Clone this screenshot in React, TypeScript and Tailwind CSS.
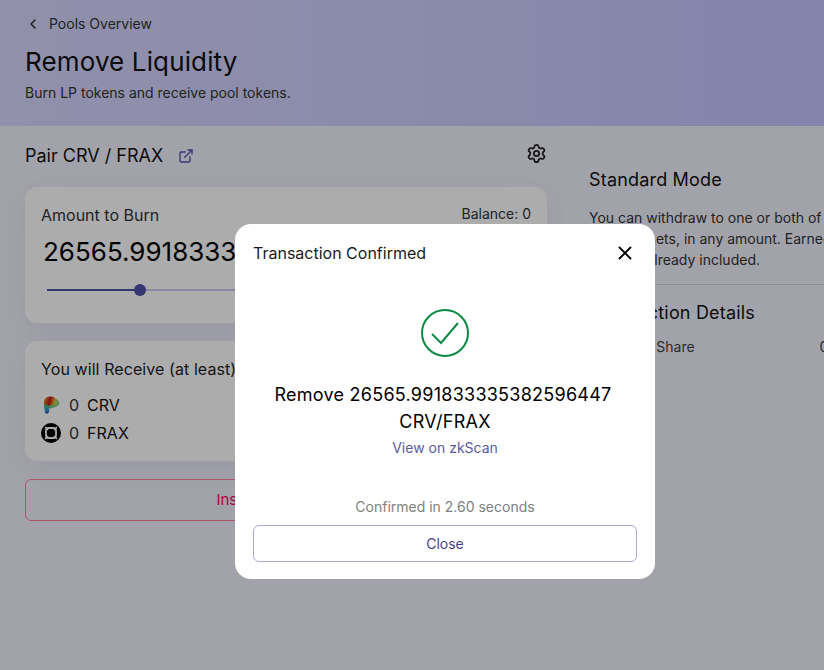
import { ChevronLeft, ExternalLink, Settings, X } from "lucide-react";

function CrvLogo() {
  return (
    <svg width="20" height="20" viewBox="0 0 20 20" aria-hidden>
      <defs>
        <linearGradient id="crv" x1="0" y1="0" x2="1" y2="0.2">
          <stop offset="0" stopColor="#e8a020" />
          <stop offset="0.45" stopColor="#c01818" />
          <stop offset="0.75" stopColor="#e8c030" />
          <stop offset="1" stopColor="#70d090" />
        </linearGradient>
        <linearGradient id="crvLow" x1="0" y1="0" x2="0" y2="1">
          <stop offset="0" stopColor="#50c060" />
          <stop offset="0.6" stopColor="#30a0d0" />
          <stop offset="1" stopColor="#2040c0" />
        </linearGradient>
      </defs>
      <path d="M3 9 C2 4 6 1 10 1.500 C14 2 18 5 18.500 8.500 C18 11 13 13 9 13 L3 12 Z" fill="url(#crv)" />
      <path d="M3 9 L8.500 11 L8 17 C7 19 4.500 19.500 4 17 C3.500 14 3 12 3 9 Z" fill="url(#crvLow)" />
      <path d="M8.500 10 L15 10.500 C13 12.500 10.500 13.500 8.500 13.500 Z" fill="#60c8a0" />
    </svg>
  );
}

function FraxLogo() {
  return (
    <svg width="20" height="20" viewBox="0 0 20 20" aria-hidden>
      <circle cx="10" cy="10" r="10" fill="#000" />
      <rect x="5" y="5" width="10" height="10" rx="2.500" fill="none" stroke="#fff" strokeWidth="1.800" />
      <path d="M4 4 L7 7 M16 4 L13 7 M4 16 L7 13 M16 16 L13 13" stroke="#fff" strokeWidth="1.500" />
      <circle cx="10" cy="10" r="2.500" fill="#000" />
    </svg>
  );
}

function TokenRow({ logo, symbol }: { logo: React.ReactNode; symbol: string }) {
  return (
    <div className="flex h-7 items-center text-base text-[#111]">
      {logo}
      <span className="ml-2 text-[#333]">0</span>
      <span className="ml-2">{symbol}</span>
    </div>
  );
}

function ConfirmedModal() {
  return (
    <div className="fixed inset-0 bg-black/[0.325]">
      <div className="absolute top-[224px] left-[235px] flex h-[355px] w-[420px] flex-col rounded-2xl bg-white px-[18px] pb-[17px]">
        <div className="flex h-[58px] shrink-0 items-center justify-between">
          <h3 className="text-base text-[#1a1a1a]">Transaction Confirmed</h3>
          <X className="mr-[1px] size-[22px] text-black" strokeWidth={2} aria-hidden />
        </div>
        <div className="mt-[27px] flex justify-center">
          <svg width="48" height="48" viewBox="0 0 48 48" fill="none" aria-hidden>
            <circle cx="24" cy="24" r="23" stroke="#0b8a45" strokeWidth="2" />
            <path d="M11 25 L20 34 L37 14" stroke="#0b8a45" strokeWidth="2" />
          </svg>
        </div>
        <p className="mt-6 text-center text-lg leading-[27px] tracking-[0.014em] text-black">
          <span className="block pr-1">Remove 26565.991833335382596447</span>
          <span className="block">CRV/FRAX</span>
        </p>
        <a className="mt-[3px] text-center text-sm leading-5 text-[#5b5b9e]">View on zkScan</a>
        <p className="mt-auto text-center text-sm leading-5 text-[#808080]">Confirmed in 2.60 seconds</p>
        <button className="mt-2 h-[37px] shrink-0 rounded-md border border-[#a9a9d2] text-sm text-[#3f3f8c]">
          Close
        </button>
      </div>
    </div>
  );
}

export default function App() {
  return (
    <div className="relative h-[670px] overflow-hidden bg-[#f1f1fd] [font-family:Inter,sans-serif]">
      <header className="h-[126px] bg-gradient-to-r from-[#d7d7fe] to-[#c4c4ff] px-[25px] pt-[14px]">
        <div className="flex h-5 items-center text-sm text-[#333]">
          <ChevronLeft className="size-4 text-[#222]" aria-hidden />
          <span className="ml-2">Pools Overview</span>
        </div>
        <h1 className="mt-[10px] text-[26px] leading-9 tracking-[0.005em] text-[#111]">Remove Liquidity</h1>
        <p className="mt-[3px] text-sm leading-5 text-[#333]">Burn LP tokens and receive pool tokens.</p>
      </header>

      <main className="flex gap-[42px] pl-[25px]">
        <section className="flex w-[522px] shrink-0 flex-col">
          <div className="flex h-[61px] items-center justify-between pb-[2px]">
            <div className="flex items-center gap-[15px]">
              <h2 className="text-lg text-[#111]">Pair CRV / FRAX</h2>
              <ExternalLink className="size-4 text-[#5353ad]" aria-hidden />
            </div>
            <Settings className="mb-1 size-[21px] text-[#222]" aria-hidden />
          </div>

          <div className="h-[136px] rounded-xl bg-white p-4 shadow-[0_8px_32px_rgba(60,60,90,0.08)]">
            <div className="flex items-start justify-between">
              <span className="text-base leading-6 text-[#333]">Amount to Burn</span>
              <span className="mt-px text-sm leading-5 text-[#333]">Balance: 0</span>
            </div>
            <div className="mt-[7px] ml-[2px] text-[26px] leading-9 text-black">26565.99183333538</div>
            <div className="mt-[14px] flex items-center pr-[12px] pl-[6px]">
              <div className="h-0.5 w-[87px] bg-[#5050a8]" />
              <div className="size-3 rounded-full bg-[#5050a8]" />
              <div className="h-0.5 flex-1 bg-[#c8c8f5]" />
            </div>
          </div>

          <div className="mt-[18px] h-[120px] rounded-xl bg-white px-4 py-4 shadow-[0_8px_32px_rgba(60,60,90,0.08)]">
            <div className="text-base leading-6 tracking-[0.005em] text-[#222]">You will Receive (at least)</div>
            <div className="mt-[10px]">
              <TokenRow logo={<CrvLogo />} symbol="CRV" />
              <TokenRow logo={<FraxLogo />} symbol="FRAX" />
            </div>
          </div>

          <button className="mt-[18px] h-[42px] rounded-md border border-[#ff7f9f] text-[15px] text-[#f0104f]">
            Insufficient Balance
          </button>
        </section>

        <aside className="w-[274px] shrink-0 pt-[42px]">
          <h2 className="text-lg leading-6 tracking-[0.01em] text-[#111]">Standard Mode</h2>
          <p className="mt-[15px] max-w-[262px] text-sm leading-[21px] text-[#333]">
            You can withdraw to one or both of the pool's assets, in any amount. Earned fees are already included.
          </p>
          <div className="mt-[14px] h-px w-[300px] bg-[#d2d2de]" />
          <h2 className="mt-4 text-lg leading-6 tracking-[0.01em] text-[#111]">Transaction Details</h2>
          <div className="mt-3 flex justify-between text-sm leading-5 text-[#444]">
            <span>Your Pool Share</span>
            <span>0.00%</span>
          </div>
        </aside>
      </main>

      <ConfirmedModal />
    </div>
  );
}
